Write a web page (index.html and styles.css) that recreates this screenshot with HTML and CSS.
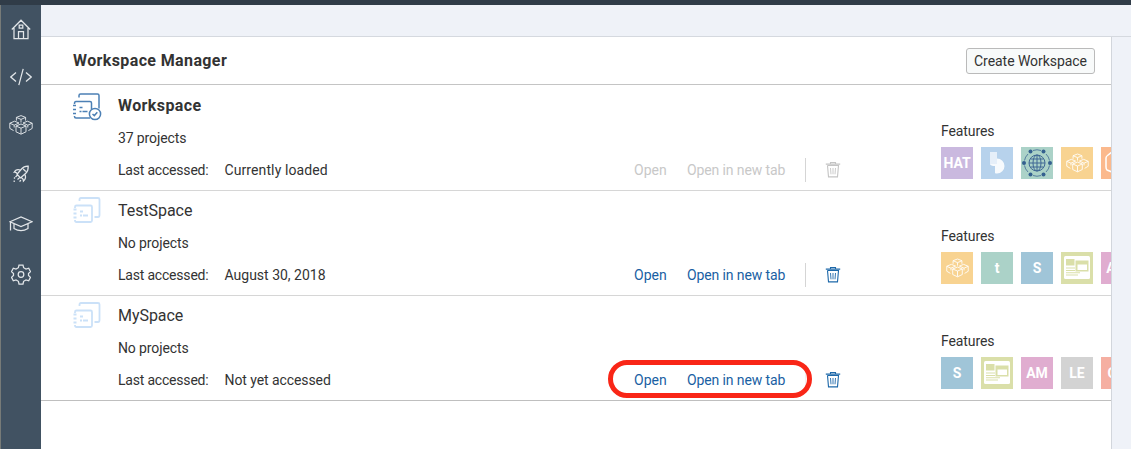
FILE: index.html
```html
<!DOCTYPE html>
<html lang="en">
<head>
<meta charset="utf-8">
<title>Workspace Manager</title>
<link rel="stylesheet" href="styles.css">
</head>
<body>
<svg class="defs" width="0" height="0" aria-hidden="true">
  <symbol id="boxes" viewBox="0 0 24 20">
    <path d="M12 .6 16.6 2.400 12 4.400 7.400 2.400ZM7.400 2.400V5.600M16.600 2.400V5.600M12 4.400V7.500M12 9 17 11V16.800L12 19.200 7 16.800V11ZM7 11 12 13.200 17 11M12 13.200V19M4.600 15.600 .8 13.400V8.200L5.600 6.200 10 8 5.200 10.200V12.500M.8 8.200 5.200 10.200M19.400 15.600 23.200 13.400V8.200L18.400 6.200 14 8 18.800 10.200V12.500M23.200 8.200 18.800 10.200"/>
  </symbol>
  <symbol id="space" viewBox="0 0 30 30">
    <path d="M6.500 6V4.500Q6.500 3 8 3H25Q26.500 3 26.500 4.500V20Q26.500 22 25 22H21.500M2 13V12Q2 10.500 3.500 10.500H17.500Q19 10.500 19 12V25.500Q19 27 17.500 27H3.500Q2 27 2 25.500V25M.5 14.500H3.500M.5 18.500H3.500M.5 22.500H3.500M7 16.500H10M7 20.500H9M10 20.500H15"/>
  </symbol>
  <symbol id="space-active" viewBox="0 0 30 30">
    <path d="M6 5.500V3.500Q6 2 7.500 2H24.500Q26 2 26 3.500V16.500M1.500 12V11.500Q1.500 9.500 3 9.500H17Q18.500 9.500 18.500 11V17M1.500 24V24.500Q1.500 26 3 26H17M0 13.500H3M0 17.500H3M0 21.500H3M6.500 15.500H9.500M6.500 19.500H8.500M9.500 19.500H14.500"/>
    <circle cx="22" cy="22" r="5.600"/><path d="m19.500 22 1.800 1.600 3-3.300"/>
  </symbol>
  <symbol id="trash" viewBox="0 0 16 18">
    <path d="M.8 3.100H15.200M5.500 2.600V1.500H10.500V2.600M2.500 4.500 3.500 15.900H12.500L13.500 4.500H2.500"/><path class="thin" d="M5.500 7 6 13.300M8 7V13.300M10.500 7 10 13.300"/>
  </symbol>
  <symbol id="news" viewBox="0 0 32 32">
    <rect x="3" y="4" width="26" height="23" rx="1.500" fill="#fff"/>
    <path fill="#dadfa9" d="M5 7H13.500V13.500H5ZM14.500 8.500H27.500V19.500H14.500ZM5 15.500H14V16.500H5ZM5 18H14V19H5ZM5 20.200H19V21.200H5ZM5 22.500H17V23.500H5Z"/>
    <path fill="#fff" d="M16.500 12.500H26V18H16.500Z"/>
  </symbol>
</svg>
<div class="app">
  <div class="topbar"></div>
  <nav class="sidebar">
    <a class="nav-item"><svg width="20" height="21" viewBox="0 0 20 21"><path d="M.8 10.500 10 1.200 19.200 10.500M3 9V19.500H17V9M7.500 19V12.500H12.500V19M8.200 6H11.800V9.200H8.200Z"/></svg></a>
    <a class="nav-item"><svg width="22" height="18" viewBox="0 0 22 18"><path d="M6 4.500 .8 9 6 13.500M16 4.500 21.200 9 16 13.500M13.200 .8 8.800 17.200"/></svg></a>
    <a class="nav-item"><svg class="fine" width="24" height="20"><use href="#boxes"/></svg></a>
    <a class="nav-item tall"><svg width="17" height="18" viewBox="0 0 17 18"><path d="M15.200 1.200Q11 1 8.500 4L4 9.300 7.500 13 12.800 8.200Q15.500 5.500 15.200 1.200ZM7.500 5Q3 3.500 1.200 7.200Q3 6.800 4.500 9M11.800 9.200Q13.800 13 10.500 16Q10.500 13.500 8 12.500M10.200 4 12.800 6.500M4.800 9.800 2.500 12M7 12.300 4.500 14.500M1.200 15.500V17M6.500 16.500 8 15.200M1 13.500 2 12.500"/></svg></a>
    <a class="nav-item tall"><svg width="24" height="18" viewBox="0 0 24 18"><path d="M1 6.800 12 2 23 6.800 12 11.500ZM1.500 7V15.500M5 9V13.500Q12 17.800 19 13.500V9"/></svg></a>
    <a class="nav-item last"><svg width="20" height="21" viewBox="0 0 20 21"><path d="M8 1H12L12.600 3.700 15 5 17.700 4.200 19.500 7.600 17.500 9.500V11.500L19.500 13.400 17.700 16.800 15 16 12.600 17.300 12 20H8L7.400 17.300 5 16 2.300 16.800 .5 13.400 2.500 11.500V9.500L.5 7.600 2.300 4.200 5 5 7.400 3.700Z"/><circle cx="10" cy="10.500" r="2.800"/></svg></a>
  </nav>
  <div class="content">
    <div class="tabs"></div>
    <main class="panel">
      <header class="panel-head"><h1>Workspace Manager</h1><button class="create">Create Workspace</button></header>
      <section class="row active">
        <svg class="space-icon"><use href="#space-active"/></svg>
        <div class="info"><h2>Workspace</h2><p class="count">37 projects</p><p class="accessed"><span class="label">Last accessed:</span><span class="loaded">Currently loaded</span></p></div>
        <div class="actions"><a class="open">Open</a><a class="newtab">Open in new tab</a><span class="divider"></span><svg class="trash"><use href="#trash"/></svg></div>
        <div class="features"><h3>Features</h3><div class="tiles">
          <span class="tile purple">HAT</span>
          <span class="tile blue"><svg width="32" height="32"><path fill="#e6eff9" d="M9 5H16V17H9Z"/><path fill="#f7fafd" d="M16 11.500A7.200 7.200 0 0 1 16 26.500Q14.500 26.500 14 26V19Q9.500 19 9 17H16Z"/></svg></span>
          <span class="tile green"><svg width="32" height="32" fill="none" stroke="#3f6794"><g stroke-width="1"><circle cx="16" cy="16" r="8"/><ellipse cx="16" cy="16" rx="4" ry="8"/><path d="M16 8V24M8 16H24M9.500 12H22.500M9.500 20H22.500"/></g><path stroke-width=".8" d="M12 3.500Q16 2 20 3.500M25 7Q28 10 28.500 13.500M28.500 18.500Q28 22 25 25M20 28.500Q16 30 12 28.500M7 25Q4 22 3.500 18.500M3.500 13.500Q4 10 7 7"/><g fill="#34608f" stroke="none"><circle cx="9.500" cy="4.500" r="2"/><circle cx="22.500" cy="4.500" r="2"/><circle cx="29" cy="16" r="2"/><circle cx="22.500" cy="27.500" r="2"/><circle cx="9.500" cy="27.500" r="2"/><circle cx="3" cy="16" r="2"/></g></svg></span>
          <span class="tile amber"><svg class="line" width="23" height="20"><use href="#boxes"/></svg></span>
          <span class="tile orange"><svg class="line" width="32" height="32"><path stroke-width="1.500" d="M16 4.500 26 10V21L16 27 6 23Q5 22 5 20V11Q5 9.500 6.500 8.500L11 5"/></svg></span>
        </div></div>
      </section>
      <section class="row">
        <svg class="space-icon"><use href="#space"/></svg>
        <div class="info"><h2>TestSpace</h2><p class="count">No projects</p><p class="accessed"><span class="label">Last accessed:</span><span>August 30, 2018</span></p></div>
        <div class="actions"><a class="open">Open</a><a class="newtab">Open in new tab</a><span class="divider"></span><svg class="trash"><use href="#trash"/></svg></div>
        <div class="features"><h3>Features</h3><div class="tiles">
          <span class="tile amber"><svg class="line" width="23" height="20"><use href="#boxes"/></svg></span>
          <span class="tile green">t</span><span class="tile steel">S</span>
          <span class="tile olive"><svg width="32" height="32"><use href="#news"/></svg></span>
          <span class="tile pink">AM</span>
        </div></div>
      </section>
      <section class="row final">
        <svg class="space-icon"><use href="#space"/></svg>
        <div class="info"><h2>MySpace</h2><p class="count">No projects</p><p class="accessed"><span class="label">Last accessed:</span><span class="never">Not yet accessed</span></p></div>
        <div class="actions"><a class="open">Open</a><a class="newtab">Open in new tab</a><span class="divider"></span><svg class="trash"><use href="#trash"/></svg><span class="highlight"></span></div>
        <div class="features"><h3>Features</h3><div class="tiles">
          <span class="tile steel">S</span>
          <span class="tile olive"><svg width="32" height="32"><use href="#news"/></svg></span>
          <span class="tile pink">AM</span><span class="tile gray">LE</span><span class="tile coral">OD</span>
        </div></div>
      </section>
    </main>
  </div>
</div>
</body>
</html>
```
FILE: styles.css
```css
* { box-sizing: border-box; }
body { margin: 0; overflow: hidden; font: 14px Roboto, sans-serif; color: #333; }
h1, h2, h3, p { margin: 0; font-weight: 400; }
.defs { display: block; height: 0; }
.app { display: grid; grid-template: 5px 444px / 41px 1090px; }
.topbar { grid-column: 1 / 3; background: #303c48; }
.sidebar { background: #415262; border-left: 1px solid #777b78; display: flex; flex-direction: column; }
.nav-item { height: 48px; display: flex; align-items: center; justify-content: center; }
.nav-item.tall { height: 50px; }
.nav-item.last { height: 51px; }
.nav-item svg { fill: none; stroke: #e2e6e9; stroke-width: 1.25; }
.nav-item .fine { stroke-width: .95; }
.content { background: #eff2f8; display: flex; flex-direction: column; }
.tabs { height: 32px; border-bottom: 1px solid #d5d9df; }
.panel { width: 1071px; height: 412px; background: #fff; border-right: 1px solid #d2d6dc; overflow: hidden; }
.panel-head { height: 48px; border-bottom: 1px solid #c4c4c4; padding: 0 16px 0 32px; display: flex; align-items: center; justify-content: space-between; }
h1 { font-size: 16px; font-weight: 700; letter-spacing: .38px; }
.create { width: 129px; height: 26px; padding: 0; border: 1px solid #bababa; border-radius: 3px; background: #f8fafa; font: 14px Roboto, sans-serif; letter-spacing: -.05px; color: #333; }
.row { height: 105px; border-bottom: 1px solid #d6d6d6; padding: 3px 0 0 32px; display: grid; grid-template-columns: 45px 516px 307px 210px; }
.row.active { height: 106px; padding-top: 4px; }
.row.final { border-color: #bfbfbf; }
.space-icon { width: 30px; height: 30px; margin-top: 1px; fill: none; stroke: #cbe1f8; stroke-width: 1.8; }
.active .space-icon { stroke: #4c80b5; stroke-width: 1.5; margin-top: 3px; }
.info { line-height: 32px; }
.info h2 { font-size: 16px; line-height: 33px; letter-spacing: -.3px; }
.info h2 { letter-spacing: -.05px; }
.active h2 { font-weight: 700; letter-spacing: .4px; }
.count { letter-spacing: -.12px; }
.accessed { display: flex; }
.label { width: 106.5px; letter-spacing: -.2px; }
.loaded { letter-spacing: .1px; }
.never { letter-spacing: -.08px; }
.actions { position: relative; height: 24px; margin-top: 69px; display: flex; align-items: center; color: #1a5fa3; }
.open, .newtab { padding-bottom: 1px; }
.open { width: 53px; }
.newtab { width: 118px; letter-spacing: -.12px; }
.divider { width: 1px; height: 24px; background: #d5d5d5; }
.final .divider { background: #f0f0f0; }
.trash { width: 16px; height: 18px; margin-left: 19px; fill: none; stroke: #1d68a9; stroke-width: 1.1; }
.thin { stroke-width: .9; }
.active .actions { color: #c8c8c8; }
.active .trash { stroke: #c4c4c4; }
.highlight { position: absolute; left: -26px; top: -8px; width: 204px; height: 38px; border: 5px solid #f92617; border-radius: 19px; }
.features { padding-top: 32px; }
.features h3 { font-size: 14px; line-height: 20px; letter-spacing: -.1px; }
.tiles { display: flex; gap: 8px; margin-top: 6px; }
.tile { flex: 0 0 32px; height: 32px; display: flex; align-items: center; justify-content: center; color: #fff; font-weight: 700; font-size: 14px; }
.line { fill: none; stroke: #fff; stroke-width: .9; }
.purple { background: #cab9df; }
.blue { background: #b7d2ec; }
.green { background: #abd2c8; }
.amber { background: #f8d391; }
.orange { background: #fbb98d; }
.steel { background: #a0c5d8; }
.olive { background: #dadfa9; }
.pink { background: #e0add0; }
.gray { background: #d3d3d3; }
.coral { background: #f5afa2; }
```
